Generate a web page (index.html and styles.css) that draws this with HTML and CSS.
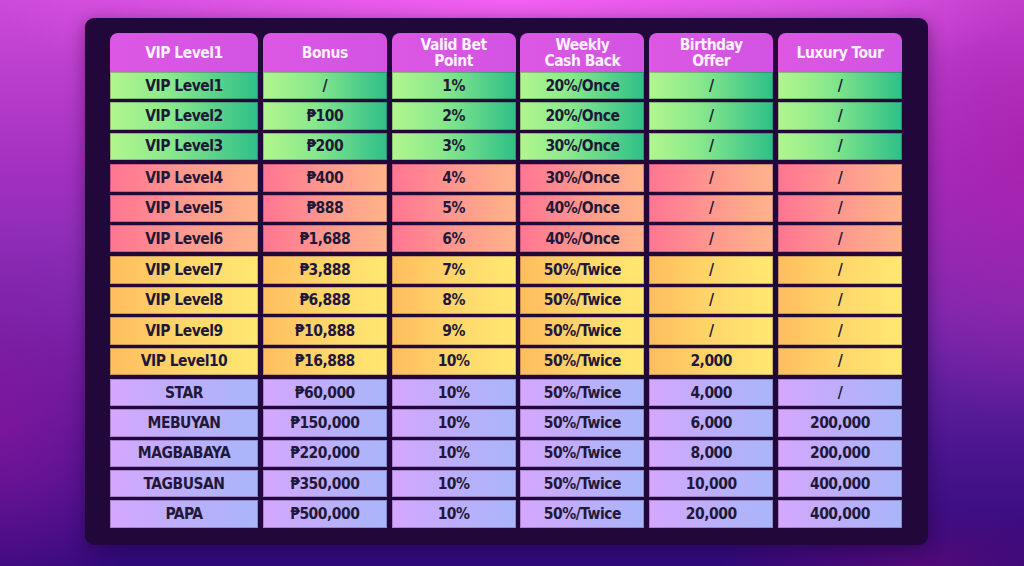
FILE: index.html
```html
<!DOCTYPE html>
<html lang="en">
<head>
<meta charset="utf-8">
<title>VIP Levels</title>
<link rel="stylesheet" href="styles.css">
</head>
<body>
<div class="bg">
  <div class="panel">
    <div class="table">
      <div class="row head">
        <div class="cell">VIP Level1</div>
        <div class="cell">Bonus</div>
        <div class="cell">Valid Bet<br>Point</div>
        <div class="cell">Weekly<br>Cash Back</div>
        <div class="cell">Birthday<br>Offer</div>
        <div class="cell">Luxury Tour</div>
      </div>
      <div class="group green first">
        <div class="row"><div class="cell">VIP Level1</div><div class="cell">/</div><div class="cell">1%</div><div class="cell">20%/Once</div><div class="cell">/</div><div class="cell">/</div></div>
        <div class="row"><div class="cell">VIP Level2</div><div class="cell">₱100</div><div class="cell">2%</div><div class="cell">20%/Once</div><div class="cell">/</div><div class="cell">/</div></div>
        <div class="row"><div class="cell">VIP Level3</div><div class="cell">₱200</div><div class="cell">3%</div><div class="cell">30%/Once</div><div class="cell">/</div><div class="cell">/</div></div>
      </div>
      <div class="group red">
        <div class="row"><div class="cell">VIP Level4</div><div class="cell">₱400</div><div class="cell">4%</div><div class="cell">30%/Once</div><div class="cell">/</div><div class="cell">/</div></div>
        <div class="row"><div class="cell">VIP Level5</div><div class="cell">₱888</div><div class="cell">5%</div><div class="cell">40%/Once</div><div class="cell">/</div><div class="cell">/</div></div>
        <div class="row"><div class="cell">VIP Level6</div><div class="cell">₱1,688</div><div class="cell">6%</div><div class="cell">40%/Once</div><div class="cell">/</div><div class="cell">/</div></div>
      </div>
      <div class="group yellow">
        <div class="row"><div class="cell">VIP Level7</div><div class="cell">₱3,888</div><div class="cell">7%</div><div class="cell">50%/Twice</div><div class="cell">/</div><div class="cell">/</div></div>
        <div class="row"><div class="cell">VIP Level8</div><div class="cell">₱6,888</div><div class="cell">8%</div><div class="cell">50%/Twice</div><div class="cell">/</div><div class="cell">/</div></div>
        <div class="row"><div class="cell">VIP Level9</div><div class="cell">₱10,888</div><div class="cell">9%</div><div class="cell">50%/Twice</div><div class="cell">/</div><div class="cell">/</div></div>
        <div class="row"><div class="cell">VIP Level10</div><div class="cell">₱16,888</div><div class="cell">10%</div><div class="cell">50%/Twice</div><div class="cell">2,000</div><div class="cell">/</div></div>
      </div>
      <div class="group purple">
        <div class="row"><div class="cell">STAR</div><div class="cell">₱60,000</div><div class="cell">10%</div><div class="cell">50%/Twice</div><div class="cell">4,000</div><div class="cell">/</div></div>
        <div class="row"><div class="cell">MEBUYAN</div><div class="cell">₱150,000</div><div class="cell">10%</div><div class="cell">50%/Twice</div><div class="cell">6,000</div><div class="cell">200,000</div></div>
        <div class="row"><div class="cell">MAGBABAYA</div><div class="cell">₱220,000</div><div class="cell">10%</div><div class="cell">50%/Twice</div><div class="cell">8,000</div><div class="cell">200,000</div></div>
        <div class="row"><div class="cell">TAGBUSAN</div><div class="cell">₱350,000</div><div class="cell">10%</div><div class="cell">50%/Twice</div><div class="cell">10,000</div><div class="cell">400,000</div></div>
        <div class="row"><div class="cell">PAPA</div><div class="cell">₱500,000</div><div class="cell">10%</div><div class="cell">50%/Twice</div><div class="cell">20,000</div><div class="cell">400,000</div></div>
      </div>
    </div>
  </div>
</div>
</body>
</html>
```
FILE: styles.css
```css
html, body {
  margin: 0;
  padding: 0;
}
body {
  width: 1024px;
  height: 566px;
  overflow: hidden;
  font-family: "DejaVu Sans Condensed", "Liberation Sans", sans-serif;
}
.bg {
  width: 1024px;
  height: 566px;
  box-sizing: border-box;
  padding: 18px 0 0 85px;
  background:
    radial-gradient(ellipse 520px 110px at 50% 0%, rgba(248, 100, 245, 0.85), rgba(248, 100, 245, 0) 100%),
    radial-gradient(ellipse 180px 260px at 100% 160px, rgba(170, 30, 170, 0.75), rgba(170, 30, 170, 0) 100%),
    radial-gradient(ellipse 170px 200px at 0% 420px, rgba(140, 20, 160, 0.7), rgba(140, 20, 160, 0) 100%),
    radial-gradient(ellipse 200px 60px at 920px 566px, rgba(90, 10, 120, 0.8), rgba(90, 10, 120, 0) 100%),
    linear-gradient(180deg, #cc4ad8 0%, #a330c0 30%, #7a2aae 55%, #4a158e 80%, #30097a 100%);
}
.panel {
  width: 843px;
  height: 527px;
  box-sizing: border-box;
  padding: 15px 26px 17px 25px;
  background: #22083a;
  border-radius: 9px;
  box-shadow: 0 4px 18px rgba(20, 0, 40, 0.45);
}
.table {
  display: flex;
  flex-direction: column;
}
.group {
  display: flex;
  flex-direction: column;
  gap: 3px;
  margin-top: 4px;
}
.group.first {
  margin-top: 0;
}
.row {
  display: grid;
  grid-template-columns: 148px repeat(5, 124px);
  column-gap: 4.8px;
}
.cell {
  height: 27.4px;
  display: flex;
  align-items: center;
  justify-content: center;
  text-align: center;
  font-size: 15.5px;
  letter-spacing: -0.5px;
  font-weight: bold;
  color: #1f1838;
  box-sizing: border-box;
  box-shadow: inset 0 0 0 1px rgba(40, 10, 60, 0.25);
}
.head .cell {
  height: 39px;
  background: linear-gradient(90deg, #dc58e4, #d253e2);
  color: #fbf0ff;
  border-radius: 8px 8px 0 0;
  line-height: 16px;
  box-shadow: none;
  padding-top: 1px;
}
.green .cell {
  background: linear-gradient(90deg, #b2f68e 0%, #8ae98c 40%, #2ebf88 100%);
}
.red .cell {
  background: linear-gradient(90deg, #ff7592 0%, #ff9a8e 55%, #ffb38a 100%);
}
.yellow .cell {
  background: linear-gradient(90deg, #ffbd5e 0%, #ffd66a 50%, #ffe872 100%);
}
.purple .cell {
  background: linear-gradient(90deg, #d5a7fe 0%, #bcaefb 50%, #a9b6f9 100%);
}
```
